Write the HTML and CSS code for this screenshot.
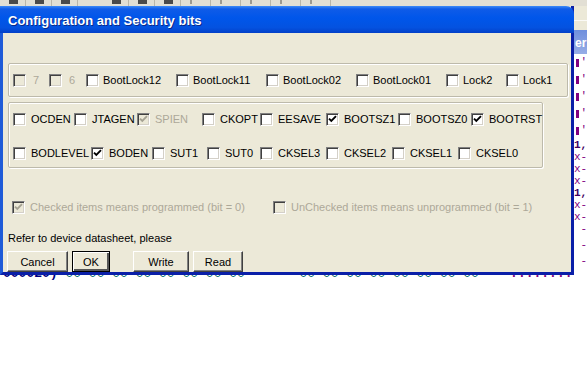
FILE: index.html
```html
<!DOCTYPE html>
<html lang="en">
<head>
    <meta charset="UTF-8">
    <title>Configuration and Security bits</title>
    <link rel="stylesheet" href="styles.css">
</head>
<body>
    <div class="toolbar">
        <span class="tb"></span><span class="tb"></span><span class="tb"></span>
        <span class="tb tb-wide"></span><span class="tb"></span><span class="tb"></span>
        <span class="tb tb-sep"></span><span class="tb tb-sep"></span><span class="tb tb-sep"></span>
        <span class="tb tb-sep"></span><span class="tb tb-sep"></span>
    </div>

    <div class="main">
        <div class="dialog">
            <div class="titlebar">Configuration and Security bits</div>

            <div class="dlg-body">
                <!-- lock bits -->
                <div class="group group-lock">
                    <div class="bits bits-lock">
                        <div class="bit off"><span class="box"></span><span class="lbl">7</span></div>
                        <div class="bit off"><span class="box"></span><span class="lbl">6</span></div>
                        <div class="bit"><span class="box"></span><span class="lbl">BootLock12</span></div>
                        <div class="bit"><span class="box"></span><span class="lbl">BootLock11</span></div>
                        <div class="bit"><span class="box"></span><span class="lbl">BootLock02</span></div>
                        <div class="bit"><span class="box"></span><span class="lbl">BootLock01</span></div>
                        <div class="bit"><span class="box"></span><span class="lbl">Lock2</span></div>
                        <div class="bit"><span class="box"></span><span class="lbl">Lock1</span></div>
                    </div>
                </div>

                <!-- fuse bits -->
                <div class="group group-fuse">
                    <div class="bits bits-high">
                        <div class="bit"><span class="box"></span><span class="lbl">OCDEN</span></div>
                        <div class="bit"><span class="box"></span><span class="lbl">JTAGEN</span></div>
                        <div class="bit off"><span class="box"><svg viewBox="0 0 11 11"><path d="M2 4.6 L4.3 6.9 L9 2.2"/></svg></span><span class="lbl">SPIEN</span></div>
                        <div class="bit"><span class="box"></span><span class="lbl">CKOPT</span></div>
                        <div class="bit"><span class="box"></span><span class="lbl">EESAVE</span></div>
                        <div class="bit"><span class="box"><svg viewBox="0 0 11 11"><path d="M2 4.6 L4.3 6.9 L9 2.2"/></svg></span><span class="lbl">BOOTSZ1</span></div>
                        <div class="bit"><span class="box"></span><span class="lbl">BOOTSZ0</span></div>
                        <div class="bit"><span class="box"><svg viewBox="0 0 11 11"><path d="M2 4.6 L4.3 6.9 L9 2.2"/></svg></span><span class="lbl">BOOTRST</span></div>
                    </div>
                    <div class="bits bits-low">
                        <div class="bit"><span class="box"></span><span class="lbl">BODLEVEL</span></div>
                        <div class="bit"><span class="box"><svg viewBox="0 0 11 11"><path d="M2 4.6 L4.3 6.9 L9 2.2"/></svg></span><span class="lbl">BODEN</span></div>
                        <div class="bit"><span class="box"></span><span class="lbl">SUT1</span></div>
                        <div class="bit"><span class="box"></span><span class="lbl">SUT0</span></div>
                        <div class="bit"><span class="box"></span><span class="lbl">CKSEL3</span></div>
                        <div class="bit"><span class="box"></span><span class="lbl">CKSEL2</span></div>
                        <div class="bit"><span class="box"></span><span class="lbl">CKSEL1</span></div>
                        <div class="bit"><span class="box"></span><span class="lbl">CKSEL0</span></div>
                    </div>
                </div>

                <div class="bits hints">
                    <div class="bit off"><span class="box"><svg viewBox="0 0 11 11"><path d="M2 4.6 L4.3 6.9 L9 2.2"/></svg></span><span class="lbl">Checked items means programmed (bit = 0)</span></div>
                    <div class="bit off"><span class="box"></span><span class="lbl">UnChecked items means unprogrammed (bit = 1)</span></div>
                </div>

                <p class="note">Refer to device datasheet, please</p>

                <div class="buttons">
                    <button class="btn btn-cancel">Cancel</button>
                    <button class="btn btn-ok">OK</button>
                    <button class="btn btn-write">Write</button>
                    <button class="btn btn-read">Read</button>
                </div>
            </div>
        </div>

        <div class="side">
            <div class="side-top"></div>
            <div class="side-head">er</div>
            <div class="side-sq"><span class="sq"></span>'</div>
            <div class="side-sq"><span class="sq"></span>'</div>
            <div class="side-sq"><span class="sq"></span>'</div>
            <div class="side-sq"><span class="sq"></span>'</div>
            <div class="side-sq"><span class="sq"></span>'</div>
            <div class="side-line dark">1,</div>
            <div class="side-line">x-</div>
            <div class="side-line">x-</div>
            <div class="side-line">x-</div>
            <div class="side-line dark">1,</div>
            <div class="side-line">x-</div>
            <div class="side-line">x-</div>
            <div class="side-line gap"> -</div>
            <div class="side-line gap"> -</div>
            <div class="side-line"> -</div>
        </div>
    </div>

    <div class="under">
        <div class="under-line"><span class="addr">000020)</span> <span class="hex">00 00 00 00 00 00 00 00       00 00 00 00 00 00 00 00</span>    <span class="dots">........</span></div>
    </div>
</body>
</html>
```

FILE: styles.css
```css
/* Base */
body {
    margin: 0;
    width: 587px;
    height: 384px;
    overflow: hidden;
    background: #fff;
    font-family: 'Liberation Sans', Arial, sans-serif;
    font-size: 11px;
    color: #000;
}

/* Toolbar strip of the window behind */
.toolbar {
    height: 6px;
    display: flex;
    background: #e2dfd4;
    overflow: hidden;
}

.tb {
    width: 22px;
    margin-left: 3px;
    border-right: 1px solid #b9b6aa;
    position: relative;
}

.tb::before {
    content: '';
    position: absolute;
    left: 6px;
    top: 0;
    width: 9px;
    height: 4px;
    background: #4a4a4a;
}

.tb-wide { margin-left: 28px; }

.tb-sep { width: 26px; }
.tb-sep::before { background: #9c9a92; width: 2px; }

/* Main row */
.main {
    display: flex;
    background: #ece9d8;
}

.dialog {
    width: 574px;
    flex: none;
    box-sizing: border-box;
    border-left: 3px solid #1f5bd8;
    border-right: 3px solid #0a1fa8;
    border-bottom: 3px solid #0a1fa8;
    background: #ece9d8;
}

.titlebar {
    height: 27px;
    margin: 0 -3px;
    padding-left: 8px;
    border-top-right-radius: 8px;
    background: linear-gradient(#3d8af7 0, #0f5be8 3px, #0056ea 45%, #0452e0 80%, #0340c8 100%);
    color: #fff;
    font-weight: bold;
    font-size: 13px;
    line-height: 29px;
    text-shadow: 1px 1px 0 #0a2a8a;
}

.dlg-body {
    height: 239px;
    padding: 30px 0 0 5px;
    box-sizing: border-box;
}

/* Group boxes */
.group {
    box-sizing: border-box;
    border: 1px solid #bdbaab;
    border-radius: 2px;
    box-shadow: inset 1px 1px 0 #fff, 1px 1px 0 #fff;
    padding: 10px 0 0 4px;
}

.group-lock {
    width: 560px;
    height: 34px;
    margin-bottom: 5px;
}

.group-fuse {
    width: 535px;
    height: 66px;
}

/* Check rows */
.bits {
    display: grid;
    height: 13px;
}

.bits-lock { grid-template-columns: 36px 37px 90px 90px 90px 90px 60px auto; }
.bits-high { grid-template-columns: 61px 63px 65px 58px 66px 72px 73px auto; }
.bits-low  { grid-template-columns: 78px 61px 55px 53px 66px 66px 66px auto; margin-top: 21px; }

.bit {
    display: flex;
    align-items: center;
    gap: 5px;
    white-space: nowrap;
}

.bits-lock .bit { gap: 4px; }

.box {
    width: 13px;
    height: 13px;
    box-sizing: border-box;
    flex: none;
    background: #fff;
    border: 1px solid;
    border-color: #808080 #fff #fff #808080;
    box-shadow: inset 1px 1px 0 #404040, inset -1px -1px 0 #d4d0c8;
}

.box svg {
    display: block;
    width: 11px;
    height: 11px;
}

.box path {
    fill: none;
    stroke: #000;
    stroke-width: 1.9;
}

.lbl { line-height: 13px; }

.off .box { background: #ece9d8; }
.off .box path { stroke: #a5a293; }
.off .lbl { color: #aca899; }
.bits-lock .off .lbl { padding-left: 3px; }

.hints {
    grid-template-columns: 261px auto;
    margin: 33px 0 0 4px;
}

.note {
    margin: 18px 0 0 0;
    line-height: 13px;
}

/* Buttons */
.buttons {
    display: flex;
    margin: 6px 0 0 -1px;
}

.btn {
    height: 21px;
    padding: 0;
    margin-right: 4px;
    font-family: 'Liberation Sans', Arial, sans-serif;
    font-size: 11px;
    color: #000;
    background: #ece9d8;
    border: 1px solid;
    border-color: #fff #404040 #404040 #fff;
    box-shadow: inset -1px -1px 0 #808080;
}

.btn-cancel { width: 61px; }
.btn-ok {
    width: 38px;
    margin-right: 23px;
    border: 1px solid #000;
    box-shadow: inset 1px 1px 0 #fff, inset -2px -2px 0 #555;
}
.btn-write { width: 56px; }
.btn-read { width: 50px; }

/* Window behind, right strip */
.side {
    width: 13px;
    display: flex;
    flex-direction: column;
    background: #fff;
    overflow: hidden;
    font-family: 'Liberation Mono', monospace;
    font-size: 11px;
    color: #800080;
}

.side-top {
    height: 24px;
    flex: none;
    background: linear-gradient(#ece9d8 14px, #fbfaf6 14px, #fbfaf6 15px, #ece9d8 15px);
}

.side-head {
    height: 24px;
    flex: none;
    padding-left: 1px;
    background: linear-gradient(#6f8fdd, #97ade6);
    color: #fff;
    font-family: 'Liberation Sans', Arial, sans-serif;
    font-weight: bold;
    font-size: 12px;
    line-height: 26px;
}

.side-sq {
    height: 17px;
    flex: none;
    display: flex;
    align-items: center;
    gap: 1px;
    padding-left: 2px;
    line-height: 17px;
}

.sq {
    width: 6px;
    height: 8px;
    background: #800080;
}

.side-line {
    height: 12px;
    flex: none;
    line-height: 12px;
    white-space: pre;
}

.side-line.gap { margin-bottom: 4px; }
.side-line.dark { color: #400060; font-weight: bold; }

/* Row of the window behind, peeking below the dialog */
.under {
    height: 7px;
    overflow: hidden;
}

.under-line {
    margin: -8px 0 0 3px;
    font-family: 'Liberation Mono', monospace;
    font-size: 13px;
    line-height: 14px;
    white-space: pre;
}

.addr { color: #000080; font-weight: bold; }
.hex { color: #006a6a; }
.dots { color: #800080; font-weight: bold; }
```
